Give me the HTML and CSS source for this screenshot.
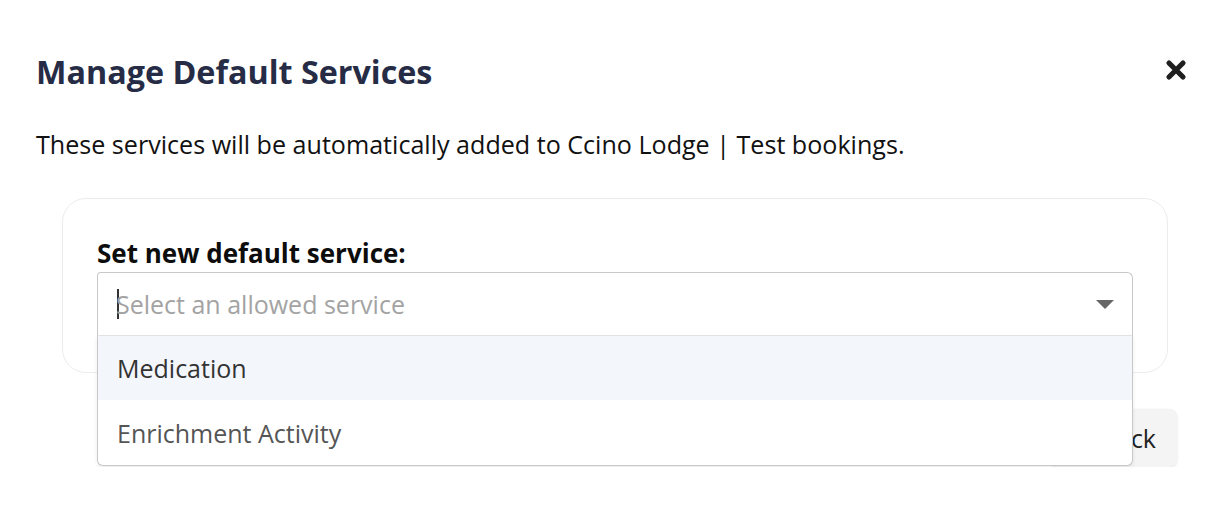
FILE: index.html
```html
<!DOCTYPE html>
<html>
<head>
<meta charset="utf-8">
<link rel="stylesheet" href="styles.css">
</head>
<body>
<div class="modal">
  <div class="header">
    <h1 class="title">Manage Default Services</h1>
    <button class="close" aria-label="Close">
      <svg width="22" height="22" viewBox="0 0 22 22"><path d="M4 4 L18 18 M18 4 L4 18" stroke="#1f1f1f" stroke-width="5.2" stroke-linecap="round"/></svg>
    </button>
  </div>
  <p class="desc">These services will be automatically added to Ccino Lodge | Test bookings.</p>
  <div class="card">
    <label class="label">Set new default service:</label>
    <div class="select">
      <div class="control">
        <span class="caret"></span>
        <span class="placeholder">Select an allowed service</span>
        <span class="arrow"></span>
      </div>
      <div class="menu">
        <div class="option focused">Medication</div>
        <div class="option muted">Enrichment Activity</div>
      </div>
    </div>
  </div>
  <div class="footer">
    <button class="back">Back</button>
  </div>
</div>
</body>
</html>
```
FILE: styles.css
```css
html, body {
  margin: 0;
  background: #fff;
}
body {
  font-family: "Open Sans", "Noto Sans", sans-serif;
  color: #111;
}
.modal {
  padding: 49px 45px 0 36px;
}
.header {
  display: flex;
  justify-content: space-between;
  align-items: center;
  height: 44px;
}
.title {
  margin: 0;
  font-size: 32.3px;
  font-weight: 700;
  color: #262c45;
  line-height: 44px;
}
.close {
  border: 0;
  background: none;
  padding: 0;
  width: 22px;
  height: 22px;
  display: flex;
  margin-top: -3px;
}
.desc {
  margin: 34px 0 0;
  font-size: 25.1px;
  line-height: 34px;
  color: #111;
}
.card {
  margin: 37px 19px 0 26px;
  border: 1px solid #ececf0;
  border-radius: 24px;
  padding: 37px 34px 36px 34px;
}
.label {
  display: block;
  font-size: 26px;
  font-weight: 700;
  line-height: 34px;
  color: #0d0d0d;
  margin-bottom: 2px;
}
.select {
  position: relative;
}
.control {
  display: flex;
  align-items: center;
  height: 62px;
  border: 1px solid #c8c8c8;
  border-bottom-color: #e4e4e6;
  border-radius: 4px 6px 0 0;
  padding: 0 18px 0 19px;
  box-sizing: content-box;
}
.caret {
  width: 2px;
  height: 30px;
  background: #333;
  margin-right: -3px;
}
.placeholder {
  flex: 1;
  font-size: 25px;
  color: #a3a3a3;
}
.arrow {
  width: 0;
  height: 0;
  border-left: 9px solid transparent;
  border-right: 9px solid transparent;
  border-top: 9px solid #666;
}
.menu {
  position: absolute;
  top: 100%;
  left: 0;
  right: 0;
  background: #fff;
  border: 1px solid #c8c8c8;
  border-top: 0;
  border-radius: 0 0 6px 6px;
  box-shadow: 0 2px 4px rgba(0,0,0,0.08);
  overflow: hidden;
  z-index: 2;
}
.option {
  height: 65px;
  display: flex;
  align-items: center;
  padding-left: 19px;
  font-size: 25px;
  color: #333;
}
.option.focused {
  background: #f3f7fb;
  height: 64px;
}
.option.muted {
  color: #555;
}
.footer {
  display: flex;
  justify-content: flex-end;
  margin-top: 36px;
  margin-right: 10px;
}
.back {
  height: 58px;
  width: 127px;
  border: 0;
  border-radius: 8px;
  background: #f4f4f4;
  box-shadow: 0 1px 3px rgba(0,0,0,0.12);
  font-family: "Open Sans", sans-serif;
  font-size: 25px;
  color: #222;
  text-align: right;
  padding: 0 21px 0 0;
}
```
